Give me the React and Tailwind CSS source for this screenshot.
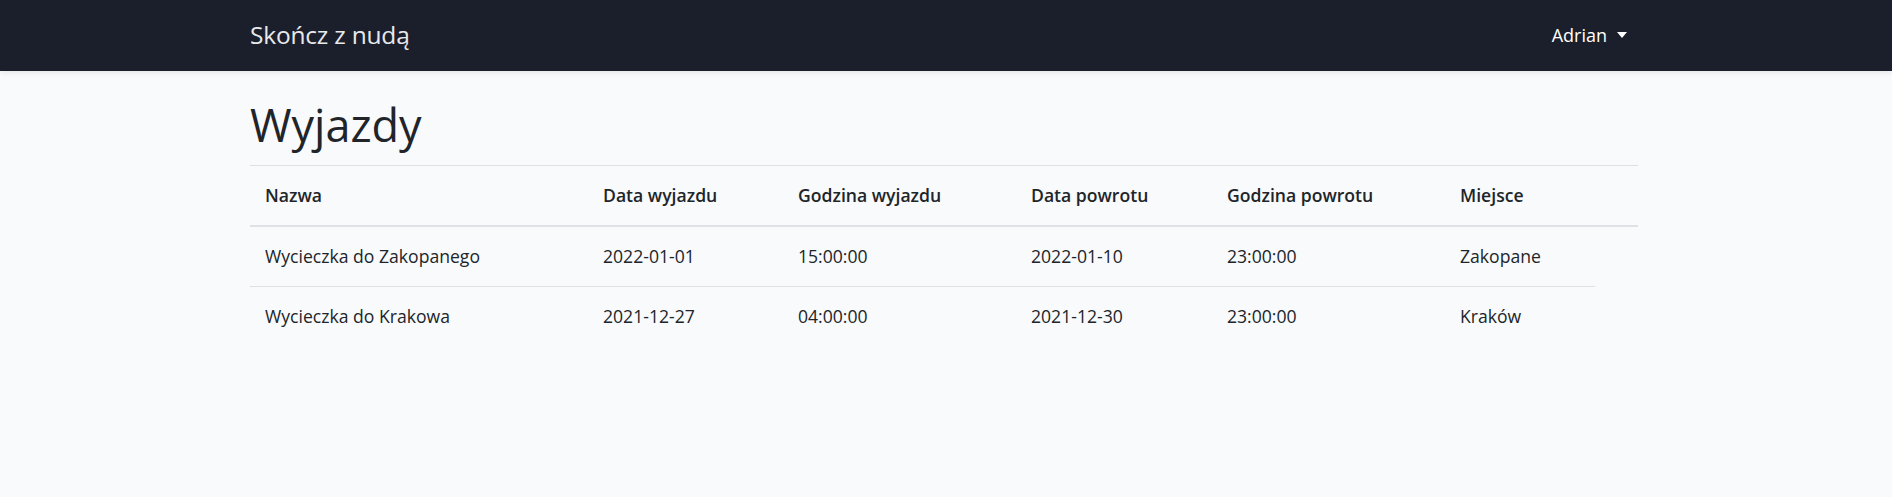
import React from "react";

const trips = [
  {
    name: "Wycieczka do Zakopanego",
    startDate: "2022-01-01",
    startTime: "15:00:00",
    endDate: "2022-01-10",
    endTime: "23:00:00",
    place: "Zakopane",
  },
  {
    name: "Wycieczka do Krakowa",
    startDate: "2021-12-27",
    startTime: "04:00:00",
    endDate: "2021-12-30",
    endTime: "23:00:00",
    place: "Kraków",
  },
];

const headers = [
  "Nazwa",
  "Data wyjazdu",
  "Godzina wyjazdu",
  "Data powrotu",
  "Godzina powrotu",
  "Miejsce",
];

const cols = "grid grid-cols-[338px_195px_233px_196px_233px_150px]";

const App = () => {
  return (
    <div className="min-h-[497px] bg-[#f8fafc] text-[#212529] font-['Open_Sans',sans-serif] text-[17.6px] leading-[28.8px]">
      {/* Navbar */}
      <nav className="h-[71px] bg-[#1b1f2b] shadow-[0_2px_6px_rgba(0,0,0,0.08)]">
        <div className="w-[1388px] ml-[250px] h-full flex items-center justify-between">
          <a className="text-[24.5px] text-[#e8e9eb] tracking-[-0.2px]">Skończ z nudą</a>
          <button className="flex items-center text-white text-[18px] pr-[11px]">
            Adrian
            <span className="ml-[10px] w-0 h-0 border-t-[6px] border-t-white border-x-[5px] border-x-transparent" />
          </button>
        </div>
      </nav>

      {/* Main */}
      <main className="pt-[27px]">
        <div className="w-[1388px] ml-[250px]">
          <h1 className="text-[45px] leading-[54px] font-normal mb-[13px]">Wyjazdy</h1>

          <div className="border-t border-[#dee2e6]">
            <div className="border-b-2 border-[#dee2e6]">
              <div className={cols}>
                {headers.map((h) => (
                  <div key={h} className="px-[15px] py-[15px] font-semibold">
                    {h}
                  </div>
                ))}
              </div>
            </div>

            {trips.map((t, i) => (
              <div
                key={t.name}
                className={i > 0 ? "border-t border-[#dee2e6] w-[1345px]" : ""}
              >
                <div className={cols}>
                  <div className="p-[15px]">{t.name}</div>
                  <div className="p-[15px]">{t.startDate}</div>
                  <div className="p-[15px]">{t.startTime}</div>
                  <div className="p-[15px]">{t.endDate}</div>
                  <div className="p-[15px]">{t.endTime}</div>
                  <div className="p-[15px]">{t.place}</div>
                </div>
              </div>
            ))}
          </div>
        </div>
      </main>
    </div>
  );
};

export default App;
